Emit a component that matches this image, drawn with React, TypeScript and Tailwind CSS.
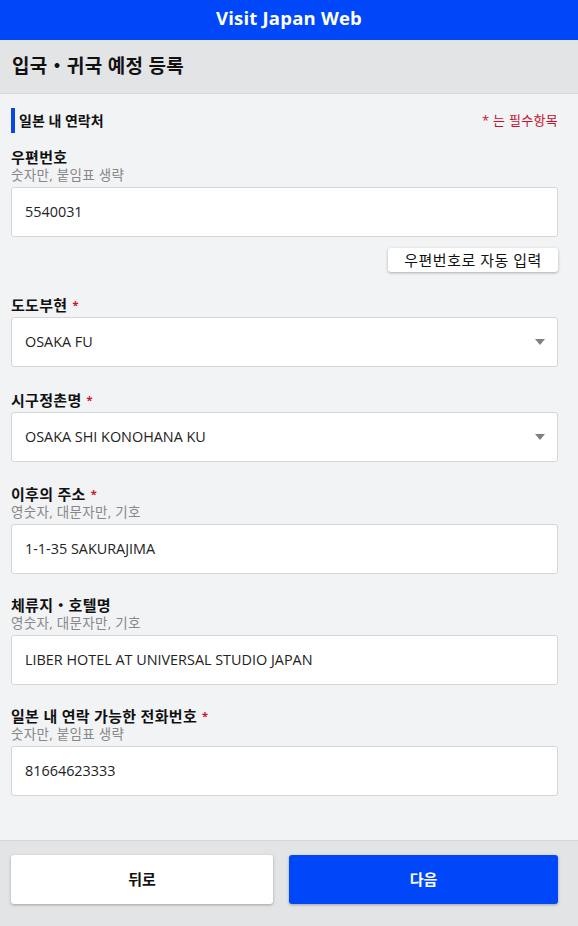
const font = { fontFamily: '"Open Sans", "Noto Sans CJK KR", sans-serif' };

function Req() {
  return <span className="ml-[5px] text-[11px] text-[#d0112b]">*</span>;
}

function Label({ text, hint, req }: { text: string; hint?: string; req?: boolean }) {
  return (
    <div className="mb-[3px]">
      <div className="flex h-[18px] items-center text-[15px] font-bold leading-[18px] tracking-[0.3px] text-[#111]">
        {text}
        {req && <Req />}
      </div>
      {hint && (
        <div className="mt-[1px] text-[13.5px] leading-[17px] tracking-[0.3px] text-[#888]">{hint}</div>
      )}
    </div>
  );
}

function Input({ value }: { value: string }) {
  return (
    <div className="flex h-[50px] items-center rounded-[3px] border border-[#d4d5d8] bg-white px-[13px] text-[14.4px] text-[#222]">
      {value}
    </div>
  );
}

function Select({ value }: { value: string }) {
  return (
    <div className="flex h-[50px] items-center justify-between rounded-[3px] border border-[#d4d5d8] bg-white pl-[13px] pr-[12px] text-[14.4px] text-[#222]">
      <span>{value}</span>
      <svg width="10" height="6" viewBox="0 0 10 6">
        <path d="M0 0h10L5 6z" fill="#808080" />
      </svg>
    </div>
  );
}

export default function App() {
  return (
    <div style={font} className="flex h-[926px] w-[578px] flex-col bg-[#f2f3f5]">
      <header className="flex h-[40px] items-center justify-center bg-[#0047fa] pb-[5px] text-[18.5px] font-bold tracking-[0.2px] text-white">
        Visit Japan Web
      </header>
      <div className="flex h-[54px] items-center border-b border-[#d6d7da] bg-[#e3e4e6] pl-[12px] text-[19px] font-bold tracking-[0.3px] text-[#111]">
        입국・귀국 예정 등록
      </div>

      <main className="flex-1 pl-[11px] pr-[20px] pt-[14px]">
        <div className="flex items-center justify-between">
          <div className="flex items-center">
            <div className="h-[25px] w-[4px] bg-[#0a46e6]" />
            <span className="ml-[4px] text-[14px] font-bold text-[#111]">일본 내 연락처</span>
          </div>
          <span className="text-[13px] tracking-[0.3px] text-[#c8102e]">* 는 필수항목</span>
        </div>

        <div className="mt-[15px]">
          <Label text="우편번호" hint="숫자만, 붙임표 생략" />
          <Input value="5540031" />
          <div className="mt-[11px] flex justify-end">
            <button className="h-[24px] w-[170px] rounded-[3px] bg-white text-[15px] tracking-[0.5px] text-[#111] shadow-[0_1px_3px_rgba(0,0,0,0.3)]">
              우편번호로 자동 입력
            </button>
          </div>
        </div>

        <div className="mt-[24px]">
          <Label text="도도부현" req />
          <Select value="OSAKA FU" />
        </div>

        <div className="mt-[24px]">
          <Label text="시구정촌명" req />
          <Select value="OSAKA SHI KONOHANA KU" />
        </div>

        <div className="mt-[23px]">
          <Label text="이후의 주소" hint="영숫자, 대문자만, 기호" req />
          <Input value="1-1-35 SAKURAJIMA" />
        </div>

        <div className="mt-[22px]">
          <Label text="체류지・호텔명" hint="영숫자, 대문자만, 기호" />
          <Input value="LIBER HOTEL AT UNIVERSAL STUDIO JAPAN" />
        </div>

        <div className="mt-[22px]">
          <Label text="일본 내 연락 가능한 전화번호" hint="숫자만, 붙임표 생략" req />
          <Input value="81664623333" />
        </div>
      </main>

      <footer className="flex h-[86px] gap-[16px] border-t border-[#d6d7da] bg-[#e3e4e6] pl-[11px] pt-[14px]">
        <button className="h-[49px] w-[262px] rounded-[3px] bg-white text-[15px] font-bold text-[#111] shadow-[0_1px_3px_rgba(0,0,0,0.3)]">
          뒤로
        </button>
        <button className="h-[49px] w-[269px] rounded-[3px] bg-[#0047fa] text-[15px] font-bold text-white shadow-[0_1px_3px_rgba(0,0,0,0.3)]">
          다음
        </button>
      </footer>
    </div>
  );
}
